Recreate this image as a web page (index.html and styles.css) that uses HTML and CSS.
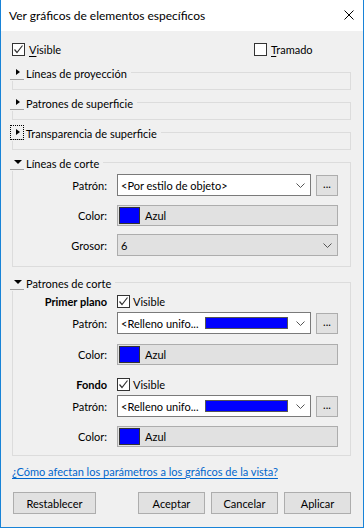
FILE: index.html
```html
<!DOCTYPE html>
<html lang="es">
<head>
    <meta charset="UTF-8">
    <meta name="viewport" content="width=device-width, initial-scale=1.0">
    <title>Ver gráficos de elementos específicos</title>
    <link rel="stylesheet" href="styles.css">
</head>
<body>
<div class="window">
    <div class="titlebar">
        <span class="title">Ver gráficos de elementos específicos</span>
        <svg class="close" width="10" height="10" viewBox="0 0 10 10">
            <path d="M0.5 0.5L9.5 9.5M9.5 0.5L0.5 9.5" stroke="#000" stroke-width="1"/>
        </svg>
    </div>

    <div class="client">
        <div class="top-row">
            <label class="check">
                <span class="box checked"><svg width="11" height="11" viewBox="0 0 11 11"><path d="M1.5 5.5L4 8.5L9.5 1.5" fill="none" stroke="#333" stroke-width="1.2"/></svg></span>
                <span><u>V</u>isible</span>
            </label>
            <label class="check">
                <span class="box"></span>
                <span><u>T</u>ramado</span>
            </label>
        </div>

        <!-- collapsed sections -->
        <div class="group collapsed">
            <div class="group-head">
                <span class="toggle"><span class="tri-right"></span></span>
                <span class="group-title">Líneas de proyección</span>
                <span class="group-line"></span>
            </div>
            <div class="group-body"></div>
        </div>

        <div class="group collapsed">
            <div class="group-head">
                <span class="toggle"><span class="tri-right"></span></span>
                <span class="group-title">Patrones de superficie</span>
                <span class="group-line"></span>
            </div>
            <div class="group-body"></div>
        </div>

        <div class="group collapsed">
            <div class="group-head">
                <span class="toggle focused"><span class="tri-right"></span></span>
                <span class="group-title">Transparencia de superficie</span>
                <span class="group-line"></span>
            </div>
            <div class="group-body"></div>
        </div>

        <!-- Líneas de corte -->
        <div class="group">
            <div class="group-head">
                <span class="toggle"><span class="tri-down"></span></span>
                <span class="group-title">Líneas de corte</span>
                <span class="group-line"></span>
            </div>
            <div class="group-body lines-body">
                <div class="form-row">
                    <span class="label">Patrón:</span>
                    <div class="control">
                        <div class="combo">
                            <span class="combo-text">&lt;Por estilo de objeto&gt;</span>
                            <svg class="chevron" width="9" height="5" viewBox="0 0 9 5"><path d="M0.5 0.5L4.5 4.5L8.5 0.5" fill="none" stroke="#555" stroke-width="1"/></svg>
                        </div>
                        <button class="dots">...</button>
                    </div>
                </div>
                <div class="form-row">
                    <span class="label">Color:</span>
                    <div class="control">
                        <div class="color-field"><span class="swatch"></span><span>Azul</span></div>
                    </div>
                </div>
                <div class="form-row">
                    <span class="label">Grosor:</span>
                    <div class="control">
                        <div class="combo disabled">
                            <span class="combo-text">6</span>
                            <svg class="chevron" width="9" height="5" viewBox="0 0 9 5"><path d="M0.5 0.5L4.5 4.5L8.5 0.5" fill="none" stroke="#555" stroke-width="1"/></svg>
                        </div>
                    </div>
                </div>
            </div>
        </div>

        <!-- Patrones de corte -->
        <div class="group cut-patterns">
            <div class="group-head">
                <span class="toggle"><span class="tri-down"></span></span>
                <span class="group-title">Patrones de corte</span>
                <span class="group-line"></span>
            </div>
            <div class="group-body patterns-body">
                <div class="form-row sub-head">
                    <span class="label bold">Primer plano</span>
                    <label class="check small">
                        <span class="box checked"><svg width="11" height="11" viewBox="0 0 11 11"><path d="M1.5 5.5L4 8.5L9.5 1.5" fill="none" stroke="#333" stroke-width="1.2"/></svg></span>
                        <span>Visible</span>
                    </label>
                </div>
                <div class="form-row pattern-row">
                    <span class="label">Patrón:</span>
                    <div class="control">
                        <div class="combo">
                            <span class="combo-text">&lt;Relleno unifo...</span>
                            <span class="fill-bar"></span>
                            <svg class="chevron near" width="9" height="5" viewBox="0 0 9 5"><path d="M0.5 0.5L4.5 4.5L8.5 0.5" fill="none" stroke="#555" stroke-width="1"/></svg>
                        </div>
                        <button class="dots">...</button>
                    </div>
                </div>
                <div class="form-row color-row">
                    <span class="label">Color:</span>
                    <div class="control">
                        <div class="color-field"><span class="swatch"></span><span>Azul</span></div>
                    </div>
                </div>

                <div class="form-row sub-head second">
                    <span class="label bold">Fondo</span>
                    <label class="check small">
                        <span class="box checked"><svg width="11" height="11" viewBox="0 0 11 11"><path d="M1.5 5.5L4 8.5L9.5 1.5" fill="none" stroke="#333" stroke-width="1.2"/></svg></span>
                        <span>Visible</span>
                    </label>
                </div>
                <div class="form-row pattern-row">
                    <span class="label">Patrón:</span>
                    <div class="control">
                        <div class="combo">
                            <span class="combo-text">&lt;Relleno unifo...</span>
                            <span class="fill-bar"></span>
                            <svg class="chevron near" width="9" height="5" viewBox="0 0 9 5"><path d="M0.5 0.5L4.5 4.5L8.5 0.5" fill="none" stroke="#555" stroke-width="1"/></svg>
                        </div>
                        <button class="dots">...</button>
                    </div>
                </div>
                <div class="form-row color-row last">
                    <span class="label">Color:</span>
                    <div class="control">
                        <div class="color-field"><span class="swatch"></span><span>Azul</span></div>
                    </div>
                </div>
            </div>
        </div>

        <div class="link-row">
            <a href="#" class="help-link">¿Cómo afectan los parámetros a los gráficos de la vista?</a>
        </div>

        <div class="button-row">
            <button class="btn reset">Restablecer</button>
            <div class="right-buttons">
                <button class="btn">Aceptar</button>
                <button class="btn">Cancelar</button>
                <button class="btn">Aplicar</button>
            </div>
        </div>
    </div>
</div>
</body>
</html>
```

FILE: styles.css
```css
body {
    margin: 0;
    font-family: Lato, "Noto Sans", sans-serif;
    font-size: 11px;
    color: #000;
    background: #f0f0f0;
}
.window {
    width: 364px;
    height: 528px;
    box-sizing: border-box;
    border: 1px solid #1883d7;
    border-top: none;
    background: #f0f0f0;
    overflow: hidden;
}
.titlebar {
    height: 31px;
    background: #ffffff;
    display: flex;
    align-items: center;
    justify-content: space-between;
    padding: 0 9px 0 8px;
}
.title {
    font-size: 12px;
}
.close {
    display: block;
    margin-top: -1px;
}
.client {
    padding: 10px 12px 0 11px;
}
.top-row {
    display: grid;
    grid-template-columns: 242px auto;
    height: 16px;
}
.check {
    display: flex;
    align-items: center;
    gap: 4px;
    height: 16px;
}
.check.small {
    gap: 3px;
}
.box {
    width: 13px;
    height: 13px;
    box-sizing: border-box;
    border: 1px solid #333;
    background: #fff;
    display: flex;
    align-items: center;
    justify-content: center;
}
.box svg {
    display: block;
}
u {
    text-decoration-thickness: 1px;
    text-underline-offset: 2px;
}

/* group boxes */
.group {
    margin-top: 8px;
}
.group.collapsed + .group {
    margin-top: 5px;
}
.group-head {
    display: flex;
    align-items: center;
    height: 16px;
    margin-left: -2px;
}
.toggle {
    width: 14px;
    height: 15px;
    box-sizing: border-box;
    border-bottom: 1px solid #a0a0a0;
    display: flex;
    align-items: center;
    justify-content: center;
    align-self: flex-start;
}
.toggle.focused {
    outline: 1px dotted #000;
    outline-offset: -1px;
}
.tri-right {
    width: 0;
    height: 0;
    border-top: 3.5px solid transparent;
    border-bottom: 3.5px solid transparent;
    border-left: 4px solid #000;
    margin-left: 2px;
}
.tri-down {
    width: 0;
    height: 0;
    border-left: 4px solid transparent;
    border-right: 4px solid transparent;
    border-top: 4px solid #000;
    margin-left: 1px;
}
.group-title {
    margin-left: 2px;
    white-space: nowrap;
}
.group-line {
    flex: 1;
    align-self: stretch;
    margin-top: 7px;
    margin-left: 4px;
    border-top: 1px solid #dcdcdc;
    border-right: 1px solid #dcdcdc;
}
.group-body {
    border: 1px solid #dcdcdc;
    border-top: none;
}
.collapsed .group-body {
    height: 8px;
}
.lines-body {
    padding: 3px 12px 10px 0;
}
.patterns-body {
    padding: 2px 12px 8px 0;
}

/* form rows */
.form-row {
    display: grid;
    grid-template-columns: 94px 1fr;
    column-gap: 10px;
    align-items: center;
    height: 22px;
}
.form-row + .form-row {
    margin-top: 8px;
}
.label {
    text-align: right;
    white-space: nowrap;
}
.label.bold {
    font-weight: 700;
}
.sub-head {
    height: 16px;
}
.form-row.pattern-row {
    margin-top: 3px;
}
.form-row.color-row {
    margin-top: 9px;
}
.form-row.color-row.last {
    margin-top: 8px;
}
.form-row.sub-head.second {
    margin-top: 11px;
}
.control {
    display: flex;
    align-items: center;
    gap: 5px;
    height: 22px;
}
.combo {
    flex: 1;
    height: 22px;
    box-sizing: border-box;
    border: 1px solid #7a7a7a;
    background: #fff;
    display: flex;
    align-items: center;
    padding: 0 5px 0 3px;
}
.combo.disabled {
    background: #e1e1e1;
    border-color: #adadad;
}
.combo-text {
    white-space: nowrap;
}
.chevron {
    display: block;
    margin-left: auto;
}
.chevron.near {
    margin-left: 8px;
}
.fill-bar {
    width: 83px;
    height: 12px;
    box-sizing: border-box;
    border: 1px solid #555;
    background: #0000ff;
    margin-left: auto;
}
.dots {
    width: 22px;
    height: 21px;
    box-sizing: border-box;
    border: 1px solid #adadad;
    background: #e1e1e1;
    font-family: inherit;
    font-size: 11px;
    padding: 0 0 4px;
    color: #000;
}
.color-field {
    flex: 1;
    height: 21px;
    box-sizing: border-box;
    border: 1px solid #adadad;
    background: #e1e1e1;
    display: flex;
    align-items: center;
    gap: 5px;
    padding-left: 1px;
}
.swatch {
    width: 21px;
    height: 17px;
    box-sizing: border-box;
    border: 1px solid #333;
    background: #0000ff;
}

/* footer */
.link-row {
    margin-top: 7px;
    height: 16px;
    display: flex;
    align-items: center;
}
.help-link {
    color: #0066cc;
    text-decoration: underline;
    text-underline-offset: 2px;
}
.button-row {
    margin-top: 13px;
    display: flex;
    justify-content: space-between;
    padding-left: 1px;
}
.right-buttons {
    display: flex;
    gap: 6px;
}
.btn {
    height: 22px;
    width: 67px;
    box-sizing: border-box;
    border: 1px solid #adadad;
    background: #e1e1e1;
    font-family: inherit;
    font-size: 11px;
    color: #000;
    padding: 0;
}
.btn.reset {
    width: 83px;
}
```
